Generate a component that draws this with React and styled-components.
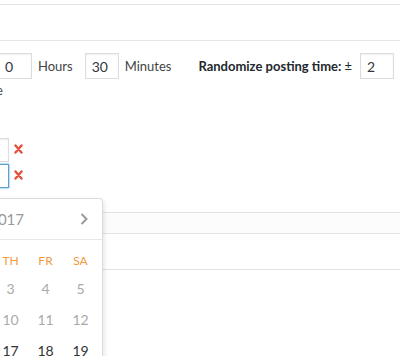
import React from "react";
import styled, { createGlobalStyle } from "styled-components";

const GlobalStyle = createGlobalStyle`
  html, body {
    margin: 0;
    padding: 0;
    background: #fff;
  }
  body {
    font-family: Lato, "Open Sans", sans-serif;
    font-size: 13px;
    color: #444;
  }
`;

const Page = styled.div`
  position: relative;
  width: 400px;
  height: 356px;
  overflow: hidden;
  background: #fff;
`;

const TopBand = styled.div`
  margin-top: 4px;
  height: 35px;
  border-top: 1px solid #e5e5e5;
  border-bottom: 1px solid #e5e5e5;
`;

const Row = styled.div`
  display: flex;
  align-items: center;
  margin-top: 12px;
  height: 26px;
`;

const NumInput = styled.input`
  box-sizing: border-box;
  width: 34px;
  height: ${({ $h }) => $h || 26}px;
  margin: 0;
  margin-left: ${({ $ml }) => $ml || 0}px;
  padding: 0 6px;
  border: 1px solid ${({ $focus }) => ($focus ? "#5b9dd9" : "#ddd")};
  border-radius: 0;
  box-shadow: ${({ $focus }) =>
    $focus ? "0 0 2px rgba(30,140,190,.8)" : "inset 0 1px 2px rgba(0,0,0,.07)"};
  background: #fff;
  font-family: Lato, "Open Sans", sans-serif;
  font-size: 14px;
  color: #32373c;
  outline: none;
`;

const Unit = styled.span`
  margin-left: ${({ $ml }) => $ml}px;
  margin-right: ${({ $mr }) => $mr}px;
  color: #444;
`;

const Label = styled.span`
  font-weight: 700;
  color: #23282d;
  margin-right: 8px;
  b {
    font-weight: 400;
  }
`;

const Note = styled.div`
  margin-left: -4px;
  margin-top: 2px;
  line-height: 18px;
`;

const Slots = styled.div`
  display: flex;
  flex-direction: column;
  gap: 2px;
  margin-top: 39px;
`;

const Slot = styled.div`
  display: flex;
  align-items: center;
  gap: 5px;
`;

const Remove = styled.svg`
  width: 9px;
  height: 10px;
  margin-top: -3px;
`;

const Table = styled.div`
  margin-top: 24px;
`;

const TableHead = styled.div`
  height: 20px;
  background: #fcfcfc;
  border-top: 1px solid #e3e3e3;
  border-bottom: 1px solid #e3e3e3;
`;

const TableRow = styled.div`
  height: 35px;
  border-bottom: 1px solid #e3e3e3;
`;

const Calendar = styled.div`
  position: absolute;
  left: -152px;
  top: 198px;
  width: 255px;
  box-sizing: border-box;
  background: #fff;
  border: 1px solid #dcdcdc;
  border-radius: 4px;
  box-shadow: 1px 2px 5px rgba(0, 0, 0, 0.12);
  padding: 0 4px 10px;
`;

const CalHeader = styled.div`
  position: relative;
  height: 40px;
  margin: 0 -4px;
  padding-left: 12px;
  border-bottom: 1px solid #e8e8e8;
  display: flex;
  align-items: center;
  justify-content: center;
  font-size: 15px;
  color: #999;
`;

const Nav = styled.svg`
  position: absolute;
  top: 14px;
  ${({ $side }) => $side}: 14px;
  width: 8px;
  height: 12px;
`;

const Grid = styled.div`
  display: grid;
  grid-template-columns: repeat(7, 35px);
  margin-top: 9px;
`;

const WeekDay = styled.div`
  height: 24px;
  line-height: 24px;
  text-align: center;
  font-size: 12px;
  color: #f39a3d;
`;

const Day = styled.div`
  height: 31px;
  line-height: 31px;
  text-align: center;
  font-size: 14px;
  color: ${({ $past }) => ($past ? "#aaa" : "#333")};
`;

const weekDays = ["SU", "MO", "TU", "WE", "TH", "FR", "SA"];
const days = [30, 31, 1, 2, 3, 4, 5, 6, 7, 8, 9, 10, 11, 12, 13, 14, 15, 16, 17, 18, 19];

const Cross = () => (
  <Remove viewBox="0 0 9 10">
    <path d="M1.5 1.5 L7.5 8.5 M7.5 1.5 L1.5 8.5" stroke="#e5503f" strokeWidth="2.4" strokeLinecap="round" />
  </Remove>
);

export default function App() {
  return (
    <Page>
      <GlobalStyle />
      <TopBand />
      <Row>
        <NumInput $ml={-2} defaultValue="0" />
        <Unit $ml={6} $mr={12}>Hours</Unit>
        <NumInput defaultValue="30" />
        <Unit $ml={6} $mr={27}>Minutes</Unit>
        <Label>
          Randomize posting time: <b>±</b>
        </Label>
        <NumInput defaultValue="2" />
      </Row>
      <Note>e</Note>
      <Slots>
        <Slot>
          <NumInput $ml={-25} $h={24} defaultValue="" />
          <Cross />
        </Slot>
        <Slot>
          <NumInput $ml={-25} $h={24} $focus defaultValue="" />
          <Cross />
        </Slot>
      </Slots>
      <Table>
        <TableHead />
        <TableRow />
      </Table>
      <Calendar>
        <CalHeader>
          <Nav $side="left" viewBox="0 0 8 12">
            <path d="M6.5 1 L1.5 6 L6.5 11" fill="none" stroke="#999" strokeWidth="2" />
          </Nav>
          August 2017
          <Nav $side="right" viewBox="0 0 8 12">
            <path d="M1.5 1 L6.5 6 L1.5 11" fill="none" stroke="#999" strokeWidth="2" />
          </Nav>
        </CalHeader>
        <Grid>
          {weekDays.map((d) => (
            <WeekDay key={d}>{d}</WeekDay>
          ))}
          {days.map((d, i) => (
            <Day key={i} $past={i < 16}>
              {d}
            </Day>
          ))}
        </Grid>
      </Calendar>
    </Page>
  );
}
